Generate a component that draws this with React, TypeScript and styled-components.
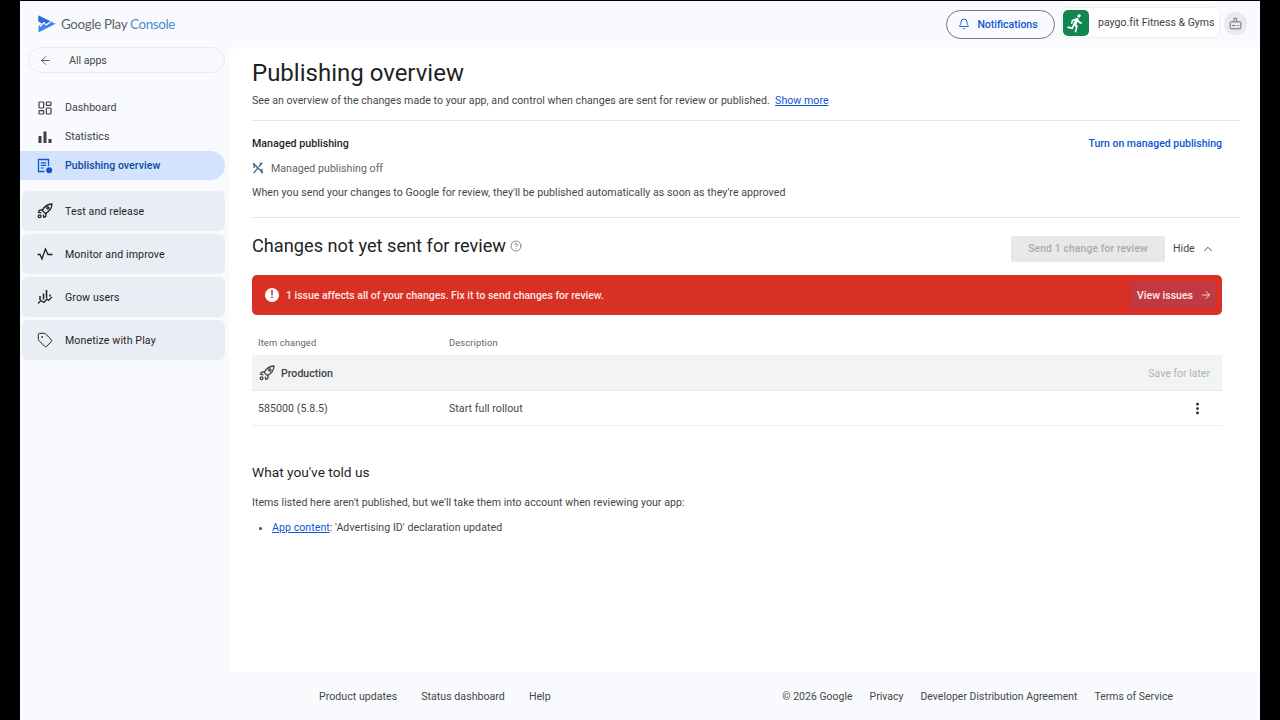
import styled, { createGlobalStyle } from 'styled-components'
import {
  ArrowLeft,
  ArrowRight,
  Bell,
  ChevronUp,
  CircleHelp,
  EllipsisVertical,
  LayoutDashboard,
  Tag,
} from 'lucide-react'

const GlobalStyle = createGlobalStyle`
  html, body {
    margin: 0;
    padding: 0;
    background: #000;
    font-family: Roboto, "Liberation Sans", sans-serif;
    color: #1f1f1f;
  }
  * { box-sizing: border-box; }
`

const Frame = styled.div`
  width: 1280px;
  height: 720px;
  padding: 1px 20px 0;
  background: #000;
  overflow: hidden;
`

const Shell = styled.div`
  height: 719px;
  background: #f8fafd;
  display: grid;
  grid-template-columns: 209px 1fr;
  grid-template-rows: 46px 625px 48px;
`

const TopBar = styled.header`
  grid-column: 1 / 3;
  display: flex;
  align-items: center;
  padding: 0 13px 0 18px;
`

const Brand = styled.div`
  display: flex;
  align-items: center;
  gap: 5px;
  font-family: Lato, Roboto, sans-serif;
  font-size: 13.4px;
  letter-spacing: -0.35px;
  color: #5f6368;
`

const BrandAccent = styled.span`
  color: #4a8ad4;
`

const TopActions = styled.div`
  margin-left: auto;
  display: flex;
  align-items: center;
`

const NotifyButton = styled.button`
  width: 109px;
  height: 29px;
  border: 1px solid #747775;
  border-radius: 15px;
  background: transparent;
  display: flex;
  align-items: center;
  justify-content: center;
  gap: 7px;
  padding: 0 5px 0 0;
  font: 500 10.5px Roboto, sans-serif;
  color: #0b57d0;
`

const AppChip = styled.div`
  margin: -3px 0 0 6px;
  width: 159px;
  height: 31px;
  background: #fff;
  border: 1px solid #eef0f3;
  border-radius: 6px;
  display: flex;
  align-items: center;
  padding-left: 1px;
  gap: 9px;
  font-size: 10.5px;
  letter-spacing: 0.03px;
  white-space: nowrap;
  color: #3c4043;
`

const AppIcon = styled.span`
  width: 26px;
  height: 26px;
  border-radius: 5px;
  background: #12864f;
  display: flex;
  align-items: center;
  justify-content: center;
  flex: none;
`

const AppName = styled.span`
  margin-bottom: 1px;
`

const RoundIcon = styled.span`
  margin: -2px 0 0 4px;
  width: 23px;
  height: 23px;
  border-radius: 50%;
  background: #e8eaed;
  display: flex;
  align-items: center;
  justify-content: center;
`

const Sidebar = styled.nav`
  grid-row: 2 / 4;
  display: flex;
  flex-direction: column;
`

const BackPill = styled.div`
  margin: 0 4px 0 8px;
  height: 26px;
  border: 1px solid #e6eaf0;
  border-radius: 13px;
  display: flex;
  align-items: center;
  padding-left: 10px;
  gap: 17px;
  font-size: 10.6px;
  color: #444746;
`

const NavList = styled.div`
  margin-top: 20px;
  display: flex;
  flex-direction: column;
`

const NavItem = styled.div<{ $active?: boolean }>`
  height: 29px;
  width: 205px;
  display: flex;
  align-items: center;
  gap: 12px;
  padding-left: 17px;
  font-size: 10.6px;
  letter-spacing: 0.03px;
  font-weight: ${(p) => (p.$active ? 500 : 400)};
  color: ${(p) => (p.$active ? '#0b4a9e' : '#3c4043')};
  background: ${(p) => (p.$active ? '#d3e3fd' : 'transparent')};
  border-radius: ${(p) => (p.$active ? '0 15px 15px 0' : '0')};
`

const GroupList = styled.div`
  margin: 11px 4px 0 2px;
  display: flex;
  flex-direction: column;
  gap: 3px;
`

const GroupItem = styled.div`
  height: 40px;
  background: #e9edf4;
  border-radius: 6px;
  display: flex;
  align-items: center;
  gap: 12px;
  padding-left: 15px;
  font-size: 10.6px;
  letter-spacing: 0.12px;
  color: #1f1f1f;
`

const Main = styled.main`
  background: #fff;
  border-radius: 12px 0 0 0;
  padding: 0 20px 0 23px;
`

const PageTitle = styled.h1`
  margin: 12px 0 0;
  font-size: 24px;
  line-height: 28px;
  font-weight: 400;
  color: #1f1f1f;
`

const Intro = styled.p`
  margin: 6px 0 0;
  font-size: 10.6px;
  line-height: 16px;
  letter-spacing: 0.03px;
  color: #444746;
`

const TextLink = styled.a`
  color: #0b57d0;
  text-decoration: underline;
`

const Divider = styled.hr`
  margin: 0;
  border: 0;
  border-top: 1px solid #e6e8ea;
`

const ManagedBlock = styled.section`
  margin-top: 11px;
  padding: 14px 0 16px;
  border-top: 1px solid #e6e8ea;
`

const ManagedHead = styled.div`
  display: flex;
  justify-content: space-between;
  align-items: center;
  padding-right: 18px;
  height: 16px;
`

const SmallHeading = styled.span`
  font-size: 10.7px;
  font-weight: 500;
  color: #1f1f1f;
`

const PlainLink = styled.a`
  font-size: 10.5px;
  font-weight: 500;
  color: #0b57d0;
`

const StatusRow = styled.div`
  margin-top: 9px;
  height: 16px;
  display: flex;
  align-items: center;
  gap: 7px;
  font-size: 10.6px;
  letter-spacing: 0.03px;
  color: #5f6368;
`

const Hint = styled.p`
  margin: 9px 0 0;
  font-size: 10.6px;
  line-height: 16px;
  letter-spacing: 0.05px;
  color: #444746;
`

const ChangesHead = styled.div`
  height: 57px;
  padding-right: 18px;
  display: flex;
  align-items: center;
`

const SectionTitle = styled.h2`
  margin: -2px 0 0;
  font-size: 18.2px;
  font-weight: 400;
  color: #1f1f1f;
`

const HelpMark = styled.span`
  margin: -1px 0 0 4px;
  display: flex;
  color: #5f6368;
`

const HeadActions = styled.div`
  margin: 4px 0 0 auto;
  display: flex;
  align-items: center;
  gap: 8px;
`

const SendButton = styled.button`
  width: 154px;
  height: 26px;
  border: 0;
  border-radius: 2px;
  background: #e8e8e8;
  color: #a8abaf;
  font: 500 10.3px Roboto, sans-serif;
  letter-spacing: 0.15px;
`

const HideToggle = styled.span`
  display: flex;
  align-items: center;
  gap: 6px;
  width: 49px;
  font-size: 10.6px;
  color: #444746;
`

const Alert = styled.div`
  margin-right: 18px;
  height: 40px;
  background: #d93025;
  border-radius: 5px;
  padding: 0 6px 0 13px;
  display: flex;
  align-items: center;
  gap: 7px;
  font-size: 10.45px;
  font-weight: 500;
  color: #fbe9e7;
`

const AlertDot = styled.span`
  width: 14px;
  height: 14px;
  border-radius: 50%;
  background: #fff;
  color: #d93025;
  font-size: 11px;
  font-weight: 700;
  line-height: 14px;
  text-align: center;
`

const ViewIssues = styled.button`
  margin-left: auto;
  height: 26px;
  width: 85px;
  border: 0;
  border-radius: 3px;
  background: #c13a43;
  color: #fbe9e7;
  display: flex;
  align-items: center;
  justify-content: center;
  gap: 7px;
  padding: 0 0 0 2px;
  font: 500 10.5px Roboto, sans-serif;
`

const ChangeTable = styled.div`
  margin: 18px 18px 0 0;
`

const ColumnRow = styled.div`
  display: grid;
  grid-template-columns: 191px 1fr;
  height: 22px;
  padding-left: 6px;
  font-size: 9.3px;
  letter-spacing: 0.15px;
  line-height: 20px;
  color: #5f6368;
`

const TrackRow = styled.div`
  height: 36px;
  background: #f1f3f4;
  border-bottom: 1px solid #e6e8ea;
  display: flex;
  align-items: center;
  gap: 6px;
  padding: 1px 12px 0 7px;
  font-size: 10.6px;
  font-weight: 500;
  color: #3c4043;
`

const SaveLater = styled.span`
  margin-left: auto;
  font-size: 10.5px;
  font-weight: 400;
  color: #b0b3b6;
`

const DataRow = styled.div`
  height: 35px;
  border-bottom: 1px solid #eceef0;
  display: grid;
  grid-template-columns: 191px 1fr 32px;
  align-items: center;
  padding-left: 6px;
  font-size: 10.6px;
  letter-spacing: 0.05px;
  color: #444746;
`

const ToldTitle = styled.h3`
  margin: 37px 0 0;
  font-size: 13.7px;
  line-height: 18px;
  font-weight: 400;
  color: #1f1f1f;
`

const ToldText = styled.p`
  margin: 14px 0 0;
  font-size: 10.6px;
  line-height: 16px;
  letter-spacing: 0.03px;
  color: #444746;
`

const ToldList = styled.ul`
  margin: 9px 0 0;
  padding: 0 0 0 20px;
  font-size: 10.6px;
  line-height: 16px;
  letter-spacing: 0.05px;
  color: #444746;
`

const Footer = styled.footer`
  display: flex;
  align-items: center;
  padding: 0 87px 0 90px;
  font-size: 10.6px;
  letter-spacing: 0.03px;
  color: #444746;
`

const FooterGroup = styled.div`
  display: flex;
  gap: 24px;
`

const FooterLegal = styled(FooterGroup)`
  margin-left: auto;
  gap: 17px;
  font-size: 10.45px;
`

const PlayLogo = () => (
  <svg width="18" height="18" viewBox="0 0 18 18" aria-hidden="true">
    <path d="M0.5 0.5 17.5 8.8 0.5 17.5V11L4 8.8 0.5 6.5Z" fill="#4285e8" />
    <path d="M0.5 0.5 12 6.2 6 8.5 0.5 6.5Z" fill="#2b6cd4" />
    <path d="M2 11.5 6 7.5 8 10 12.5 7" fill="none" stroke="#fff" strokeWidth="1.1" />
  </svg>
)

const RunnerIcon = () => (
  <svg width="20" height="20" viewBox="0 0 24 24" fill="#fff" style={{ transform: 'skewX(-14deg)' }} aria-hidden="true">
    <path d="M13.49 5.48c1.1 0 2-.9 2-2s-.9-2-2-2-2 .9-2 2 .9 2 2 2zm-3.6 13.9 1-4.4 2.1 2v6h2v-7.5l-2.1-2 .6-3c1.3 1.5 3.3 2.5 5.5 2.5v-2c-1.9 0-3.5-1-4.3-2.4l-1-1.6c-.4-.6-1-1-1.7-1-.3 0-.5.1-.8.1l-5.2 2.2v4.7h2v-3.4l1.8-.7-1.6 8.1-4.9-1-.4 2 7 1.4z" />
  </svg>
)

const ShopIcon = () => (
  <svg width="13" height="13" viewBox="0 0 16 16" fill="none" stroke="#6b6f73" strokeWidth="1.2" aria-hidden="true">
    <rect x="1.5" y="6" width="13" height="8.5" rx="1" />
    <path d="M6 6V1.5h3.5V6M4 10.5h4M10.5 10.5h2" />
  </svg>
)

const RocketIcon = ({ color = '#1f1f1f' }: { color?: string }) => (
  <svg width="16" height="16" viewBox="0 0 16 16" fill="none" stroke={color} strokeWidth="1.3" strokeLinejoin="round" aria-hidden="true">
    <path d="M15 1C10.5 1.2 7.5 3.2 5.2 7.4L8.4 10.6C12.6 8.3 14.8 5.5 15 1Z" />
    <path d="M5.4 7 2.4 7.2 1.4 9.2 4.3 9.8M9 10.4 8.8 13.4 6.8 14.4 6.2 11.6" />
    <circle cx="10.8" cy="5" r="1.1" />
    <circle cx="2.6" cy="13.2" r="1.4" />
  </svg>
)

const PulseIcon = () => (
  <svg width="16" height="16" viewBox="0 0 16 16" fill="none" stroke="#1f1f1f" strokeWidth="1.3" aria-hidden="true">
    <path d="M0.5 8.5H3L5 13 8.4 3 11 8.5H15.5" />
  </svg>
)

const DashIcon = () => <LayoutDashboard size={16} strokeWidth={1.8} color="#3c4043" />

const BarsIcon = () => (
  <svg width="16" height="16" viewBox="0 0 16 16" fill="#3c4043" aria-hidden="true">
    <rect x="1.5" y="7" width="3" height="7" />
    <rect x="6.5" y="2.5" width="3" height="11.5" />
    <rect x="11.5" y="10" width="3" height="4" />
  </svg>
)

const PublishIcon = () => (
  <svg width="16" height="16" viewBox="0 0 16 16" fill="none" aria-hidden="true">
    <path d="M11.5 8V1.5h-10v12h6" stroke="#0b57d0" strokeWidth="1.3" />
    <path d="M3.8 4.8h5.4M3.8 7.4h5.4M3.8 10h3" stroke="#0b57d0" strokeWidth="1.2" />
    <circle cx="12.2" cy="12.2" r="3" fill="#0b57d0" />
  </svg>
)

const GrowIcon = () => (
  <svg width="16" height="16" viewBox="0 0 16 16" fill="none" stroke="#1f1f1f" strokeWidth="1.5" aria-hidden="true">
    <path d="M3 7v4M6.5 4.5v6M9.5 1v8M13 5.5v2" />
    <path d="M1 14.5 4 11.5l3 2 3-3.5 1.5 1.5L15 8" strokeWidth="1.2" />
  </svg>
)

const ManagedOffIcon = () => (
  <svg width="12" height="12" viewBox="0 0 14 14" fill="none" stroke="#3d5f80" strokeWidth="1.5" aria-hidden="true">
    <path d="M1.5 1.5 12.5 12.5" />
    <path d="M2 13 6.5 7.5M8 5.5 12 1M2.5 2V7M11.5 8v5M9 1.5h3" />
  </svg>
)

const navItems = [
  { label: 'Dashboard', icon: <DashIcon /> },
  { label: 'Statistics', icon: <BarsIcon /> },
  { label: 'Publishing overview', icon: <PublishIcon />, active: true },
]

const groups = [
  { label: 'Test and release', icon: <RocketIcon /> },
  { label: 'Monitor and improve', icon: <PulseIcon /> },
  { label: 'Grow users', icon: <GrowIcon /> },
  { label: 'Monetize with Play', icon: <Tag size={16} strokeWidth={1.5} /> },
]

const App = () => {
  return (
    <Frame>
      <GlobalStyle />
      <Shell>
        <TopBar>
          <Brand>
            <PlayLogo />
            <span>
              Google Play <BrandAccent>Console</BrandAccent>
            </span>
          </Brand>
          <TopActions>
            <NotifyButton>
              <Bell size={12} strokeWidth={1.8} />
              Notifications
            </NotifyButton>
            <AppChip>
              <AppIcon>
                <RunnerIcon />
              </AppIcon>
              <AppName>paygo.fit Fitness &amp; Gyms</AppName>
            </AppChip>
            <RoundIcon>
              <ShopIcon />
            </RoundIcon>
          </TopActions>
        </TopBar>

        <Sidebar>
          <BackPill>
            <ArrowLeft size={13} strokeWidth={1.6} />
            All apps
          </BackPill>
          <NavList>
            {navItems.map((item) => (
              <NavItem key={item.label} $active={item.active}>
                {item.icon}
                {item.label}
              </NavItem>
            ))}
          </NavList>
          <GroupList>
            {groups.map((group) => (
              <GroupItem key={group.label}>
                {group.icon}
                {group.label}
              </GroupItem>
            ))}
          </GroupList>
        </Sidebar>

        <Main>
          <PageTitle>Publishing overview</PageTitle>
          <Intro>
            See an overview of the changes made to your app, and control when changes are sent for
            review or published.&nbsp; <TextLink>Show more</TextLink>
          </Intro>
          <ManagedBlock>
            <ManagedHead>
              <SmallHeading>Managed publishing</SmallHeading>
              <PlainLink>Turn on managed publishing</PlainLink>
            </ManagedHead>
            <StatusRow>
              <ManagedOffIcon />
              Managed publishing off
            </StatusRow>
            <Hint>
              When you send your changes to Google for review, they'll be published automatically as
              soon as they're approved
            </Hint>
          </ManagedBlock>
          <Divider />
          <ChangesHead>
            <SectionTitle>Changes not yet sent for review</SectionTitle>
            <HelpMark>
              <CircleHelp size={12} strokeWidth={1.5} />
            </HelpMark>
            <HeadActions>
              <SendButton disabled>Send 1 change for review</SendButton>
              <HideToggle>
                Hide
                <ChevronUp size={14} strokeWidth={1.6} />
              </HideToggle>
            </HeadActions>
          </ChangesHead>
          <Alert>
            <AlertDot>!</AlertDot>
            1 issue affects all of your changes. Fix it to send changes for review.
            <ViewIssues>
              View issues
              <ArrowRight size={12} strokeWidth={1.8} />
            </ViewIssues>
          </Alert>
          <ChangeTable>
            <ColumnRow>
              <span>Item changed</span>
              <span>Description</span>
            </ColumnRow>
            <TrackRow>
              <RocketIcon color="#444746" />
              Production
              <SaveLater>Save for later</SaveLater>
            </TrackRow>
            <DataRow>
              <span>585000 (5.8.5)</span>
              <span>Start full rollout</span>
              <EllipsisVertical size={15} strokeWidth={2.4} color="#1f1f1f" />
            </DataRow>
          </ChangeTable>
          <ToldTitle>What you've told us</ToldTitle>
          <ToldText>
            Items listed here aren't published, but we'll take them into account when reviewing your
            app:
          </ToldText>
          <ToldList>
            <li>
              <TextLink>App content</TextLink>: 'Advertising ID' declaration updated
            </li>
          </ToldList>
        </Main>

        <Footer>
          <FooterGroup>
            <span>Product updates</span>
            <span>Status dashboard</span>
            <span>Help</span>
          </FooterGroup>
          <FooterLegal>
            <span>© 2026 Google</span>
            <span>Privacy</span>
            <span>Developer Distribution Agreement</span>
            <span>Terms of Service</span>
          </FooterLegal>
        </Footer>
      </Shell>
    </Frame>
  )
}

export default App
